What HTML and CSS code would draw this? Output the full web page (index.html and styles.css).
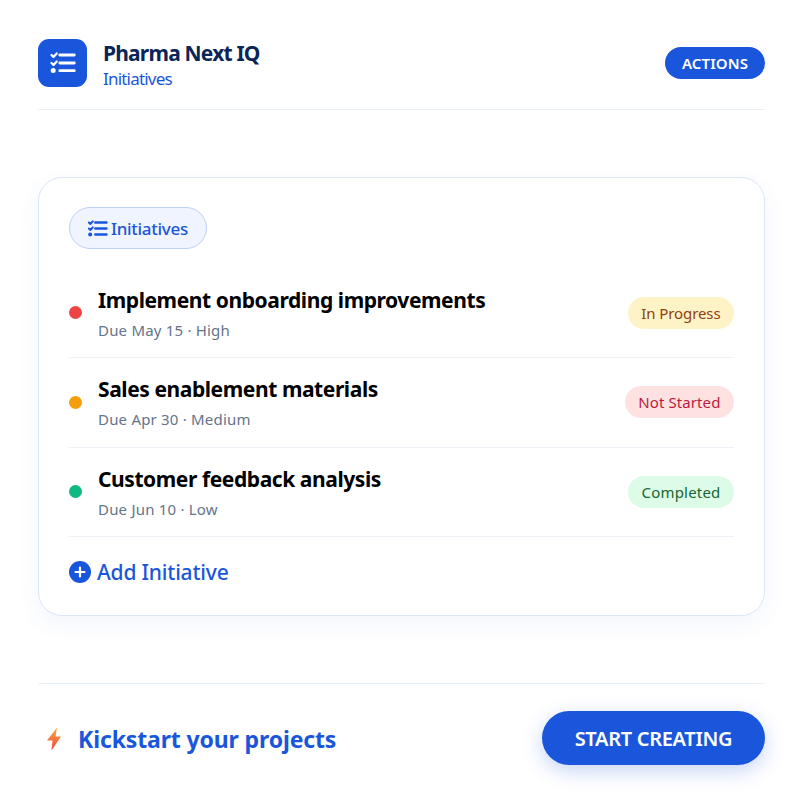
FILE: index.html
```html
<!DOCTYPE html>
<html lang="en">
<head>
<meta charset="utf-8">
<title>Pharma Next IQ</title>
<link rel="stylesheet" href="styles.css">
</head>
<body>
<div class="page">
  <header class="header">
    <div class="brand">
      <div class="logo">
        <svg width="28" height="28" viewBox="0 0 28 28" fill="none" stroke="#fff" stroke-linecap="round" stroke-linejoin="round">
          <path d="M2.500 6l2 2 3.200-3.600M2.500 14l2 2 3.200-3.600" stroke-width="2.200"/>
          <path d="M10.800 6h14.500M10.800 14h14.500M10.800 21.700h14.500" stroke-width="2.800"/>
          <circle cx="4.200" cy="21.500" r="2.500" fill="#fff" stroke="none"/>
        </svg>
      </div>
      <div class="brand-text">
        <div class="brand-name">Pharma Next IQ</div>
        <div class="brand-sub">Initiatives</div>
      </div>
    </div>
    <button class="actions">ACTIONS</button>
  </header>

  <main class="card">
    <div class="chip">
      <svg width="21" height="21" viewBox="0 0 28 28" fill="none" stroke="#1a56db" stroke-linecap="round" stroke-linejoin="round">
        <path d="M2.500 6l2 2 3.200-3.600M2.500 14l2 2 3.200-3.600" stroke-width="2.600"/>
        <path d="M11 6h15M11 14h15M11 22h15" stroke-width="3.200"/>
        <circle cx="4.200" cy="22" r="2.700" fill="#1a56db" stroke="none"/>
      </svg>
      <span>Initiatives</span>
    </div>
    <ul class="list">
      <li class="row">
        <span class="dot dot-red"></span>
        <div class="info">
          <div class="title">Implement onboarding improvements</div>
          <div class="meta">Due May 15 · High</div>
        </div>
        <span class="badge badge-yellow">In Progress</span>
      </li>
      <li class="row">
        <span class="dot dot-orange"></span>
        <div class="info">
          <div class="title">Sales enablement materials</div>
          <div class="meta">Due Apr 30 · Medium</div>
        </div>
        <span class="badge badge-red">Not Started</span>
      </li>
      <li class="row">
        <span class="dot dot-green"></span>
        <div class="info">
          <div class="title">Customer feedback analysis</div>
          <div class="meta">Due Jun 10 · Low</div>
        </div>
        <span class="badge badge-green">Completed</span>
      </li>
    </ul>
    <div class="add">
      <svg width="22" height="22" viewBox="0 0 22 22">
        <circle cx="11" cy="11" r="11" fill="#1a56db"/>
        <path d="M11 6.500v9M6.500 11h9" stroke="#fff" stroke-width="2.200" stroke-linecap="round"/>
      </svg>
      <span>Add Initiative</span>
    </div>
  </main>

  <footer class="footer">
    <div class="kick">
      <svg width="16" height="24" viewBox="0 0 16 24">
        <defs>
          <linearGradient id="bolt" x1="0" y1="0" x2="0" y2="1">
            <stop offset="0" stop-color="#fbab3c"/>
            <stop offset="1" stop-color="#ef4444"/>
          </linearGradient>
        </defs>
        <path d="M11 0.500L1 13.500H6.500L5.500 23.500L15 9.500H9.500L11 0.500z" fill="url(#bolt)"/>
      </svg>
      <span>Kickstart your projects</span>
    </div>
    <button class="start">START CREATING</button>
  </footer>
</div>
</body>
</html>
```

FILE: styles.css
```css
* { box-sizing: border-box; }
html, body { margin: 0; padding: 0; background: #fff; }
body { font-family: "Noto Sans", "Open Sans", sans-serif; }
.page { width: 727px; margin-left: 38px; padding: 39px 0 33px; }

.header {
  display: flex; align-items: center; justify-content: space-between;
  height: 71px; padding-bottom: 22px;
  border-bottom: 1px solid #e8f0f8;
}
.brand { display: flex; align-items: center; gap: 16px; }
.logo {
  width: 49px; height: 48px; border-radius: 11px; background: #1a56db;
  display: flex; align-items: center; justify-content: center;
}
.brand-text { display: flex; flex-direction: column; padding-top: 2px; }
.brand-name { font-size: 21px; font-weight: 700; line-height: 28px; color: #0b2559; letter-spacing: -0.8px; }
.brand-sub { font-size: 17px; line-height: 23px; color: #1a56db; letter-spacing: -0.8px; }
.actions {
  width: 100px; height: 32px; border: 0; border-radius: 16px; background: #1a56db;
  color: #fff; font: 600 15px "Noto Sans", sans-serif; padding: 0; letter-spacing: 0.1px;
}

.card {
  margin-top: 67px; height: 439px; padding: 29px 30px 0;
  background: #fff; border: 1px solid #dbe6f7; border-radius: 24px;
  box-shadow: 0 8px 24px rgba(26, 86, 219, 0.06);
}
.chip {
  display: inline-flex; align-items: center; gap: 3px;
  width: 138px; height: 42px; padding-left: 17px;
  background: #eff4fe; border: 1px solid #bfd1f5; border-radius: 21px;
  color: #1a56db; font-size: 17px; font-weight: 500; letter-spacing: -0.3px;
}
.list { list-style: none; margin: 19.6px 0 0; padding: 0; }
.row {
  display: flex; align-items: center; height: 89.6px;
  border-bottom: 1px solid #eef2f8;
}
.dot { width: 13px; height: 13px; border-radius: 50%; flex: none; margin: 0 16px 0.4px 0; }
.dot-red { background: #ef4444; }
.dot-orange { background: #f59e0b; }
.dot-green { background: #10b981; }
.info { flex: 1; padding-top: 0.4px; }
.title { font-size: 21px; font-weight: 700; line-height: 29px; color: #000; letter-spacing: -0.42px; }
.meta { font-size: 15px; line-height: 21px; margin-top: 5px; color: #64748b; letter-spacing: 0.2px; }
.badge {
  height: 32px; line-height: 32px; padding: 0 13.5px; border-radius: 16px; font-size: 15px; flex: none;
}
.badge-yellow { background: #fef3c7; color: #92400e; letter-spacing: -0.1px; }
.badge-red { background: #fee2e2; color: #b91c3c; letter-spacing: 0.1px; }
.badge-green { background: #dcfce7; color: #166534; letter-spacing: 0.2px; }
.add {
  display: flex; align-items: center; gap: 6px; margin-top: 22.6px;
  color: #1a56db; font-size: 21px; font-weight: 500; line-height: 24px; letter-spacing: -0.18px;
}

.footer {
  display: flex; align-items: center; justify-content: space-between;
  margin-top: 67px; padding-top: 27px; border-top: 1px solid #e8f0f8;
}
.kick {
  display: flex; align-items: center; gap: 16px; padding: 2px 0 0 8px;
  color: #1a56db; font-size: 23px; font-weight: 700; letter-spacing: -0.13px;
}
.start {
  width: 223px; height: 54px; border: 0; border-radius: 27px; background: #1a56db;
  color: #fff; font: 600 20px "Noto Sans", sans-serif; padding: 0; letter-spacing: -0.3px;
  box-shadow: 0 6px 20px rgba(26, 86, 219, 0.25);
}
```
